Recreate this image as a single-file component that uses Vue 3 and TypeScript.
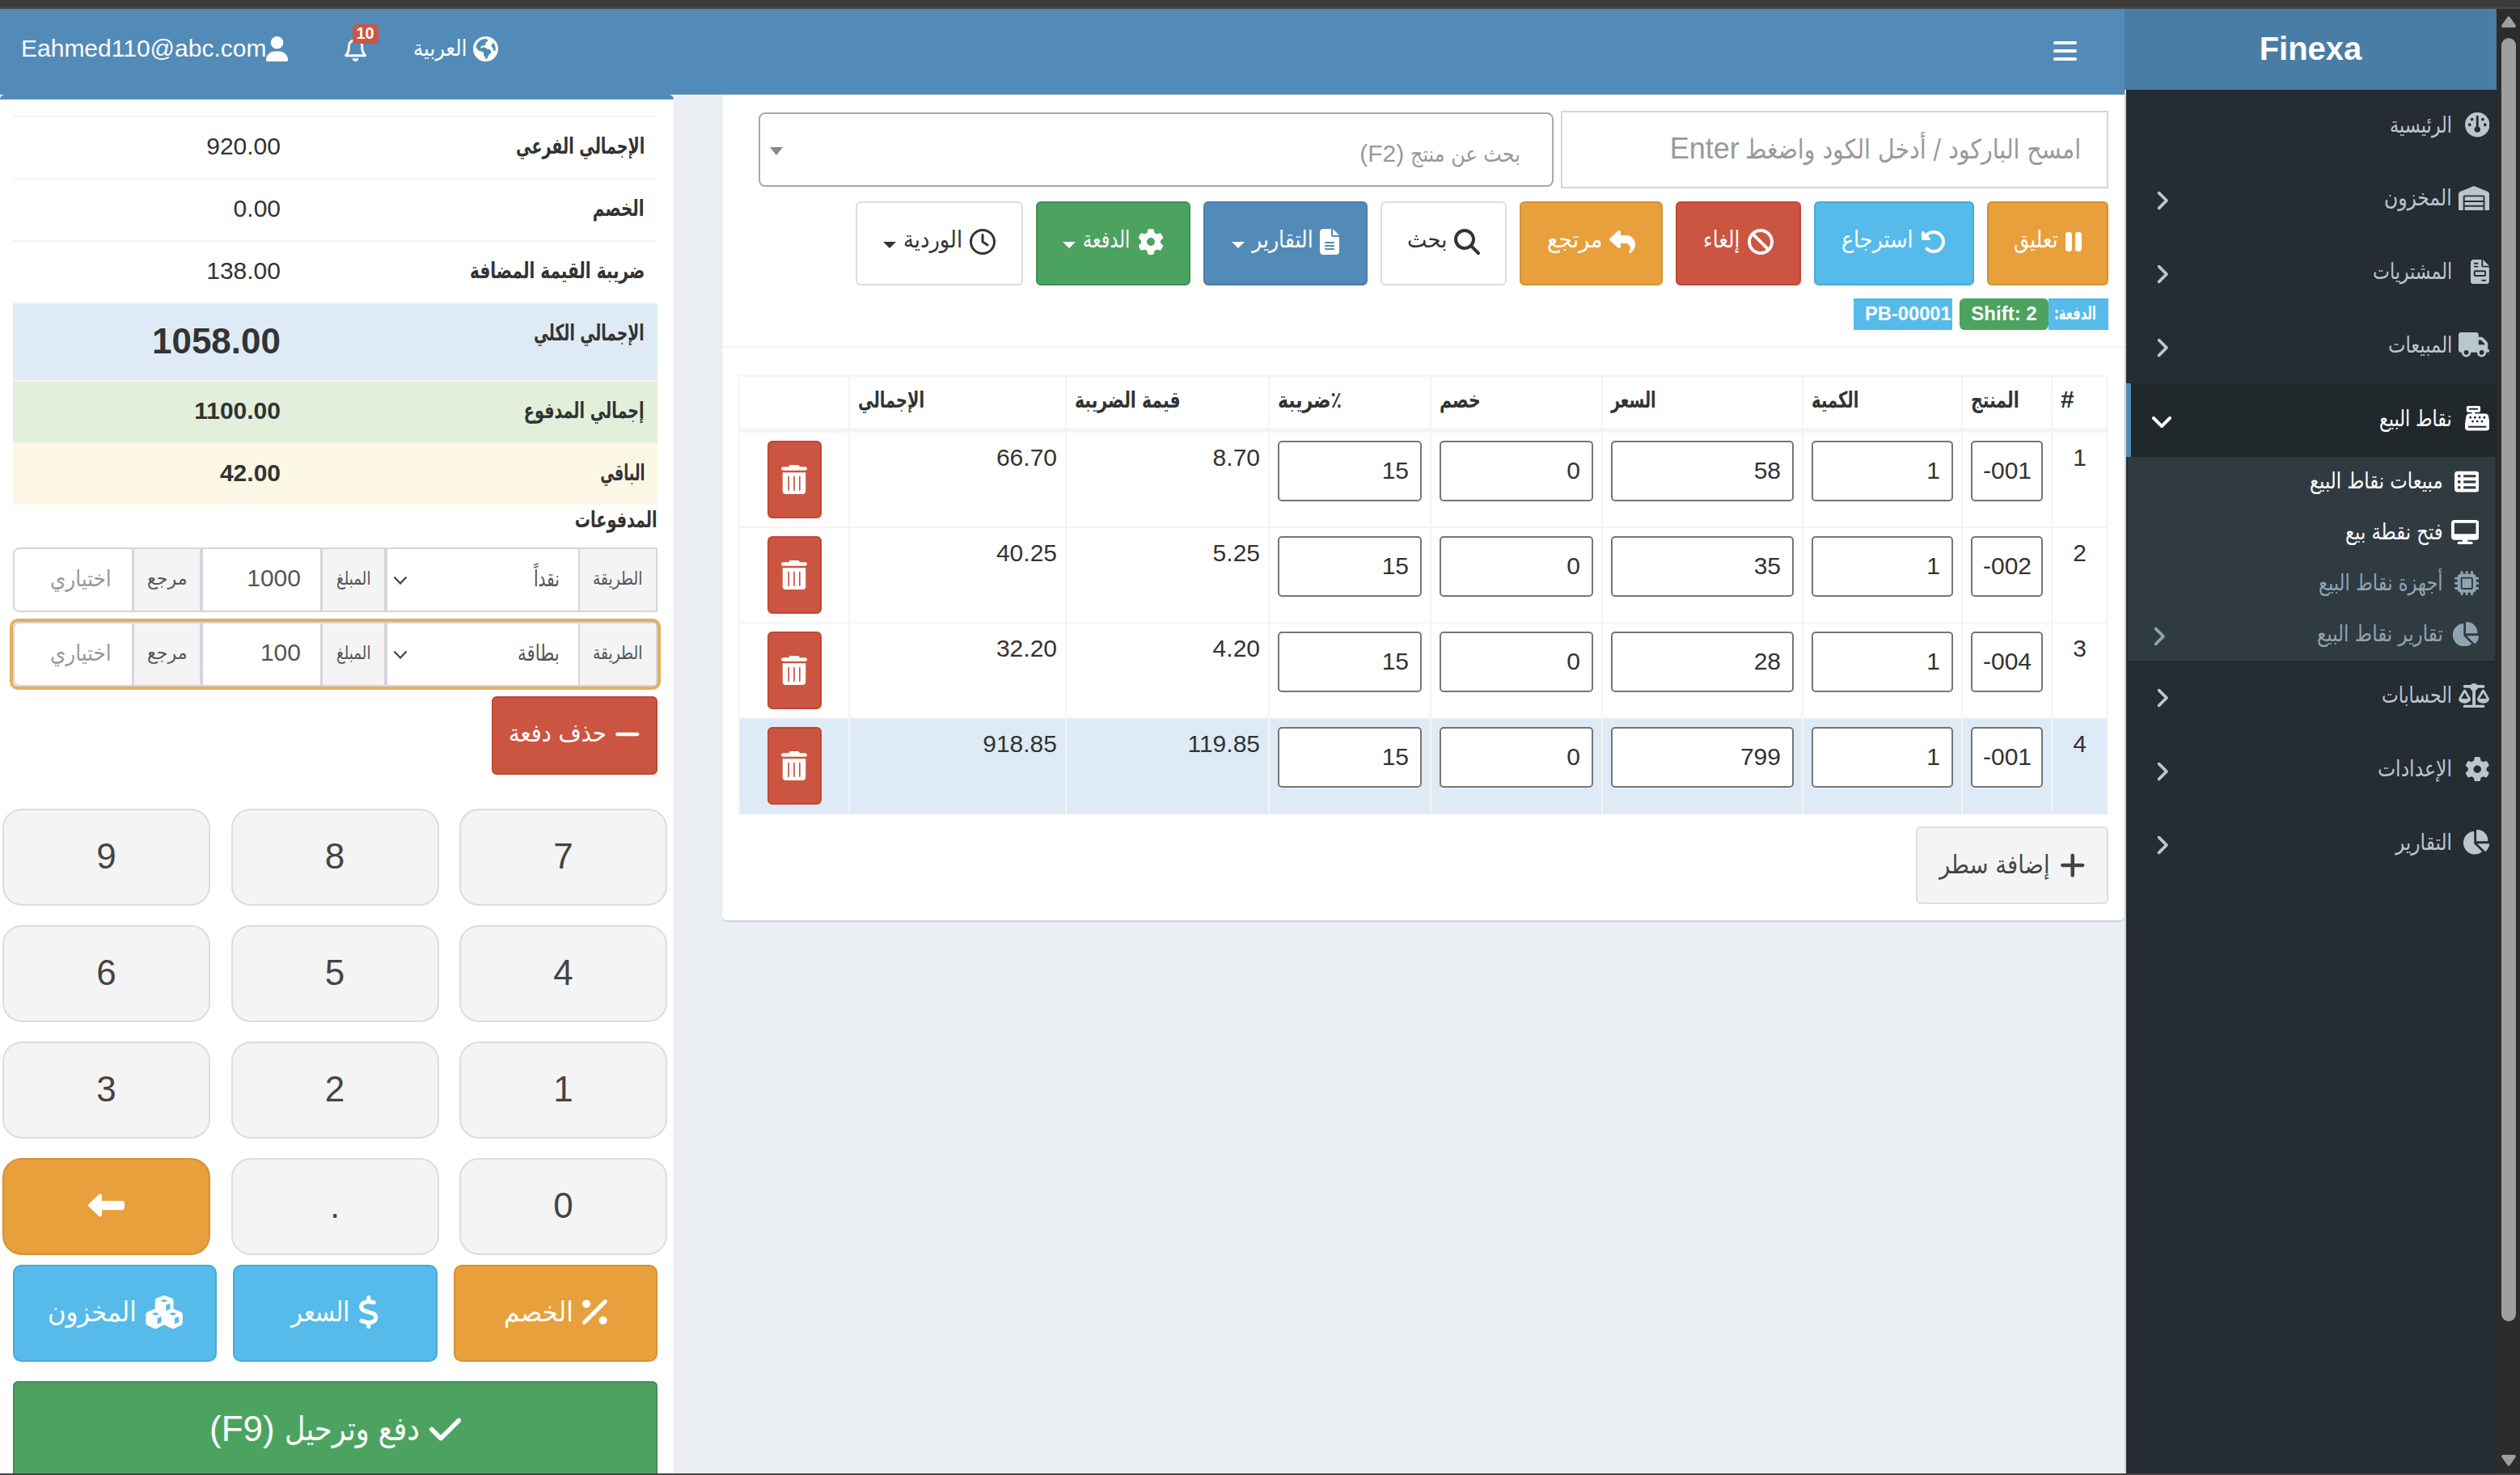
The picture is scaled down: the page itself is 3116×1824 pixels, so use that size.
<script setup lang="ts">
import { h } from 'vue'
import type { FunctionalComponent } from 'vue'

interface IconDef { w: number; d: string; eo?: boolean }

const icons: Record<string, IconDef> = {
  user: { w: 448, d: 'M224 256A128 128 0 1 0 224 0a128 128 0 1 0 0 256zm-45.7 48C79.8 304 0 383.8 0 482.3C0 498.7 13.3 512 29.7 512l388.6 0c16.4 0 29.7-13.3 29.7-29.7C448 383.8 368.2 304 269.7 304l-91.4 0z' },
  bell: { w: 448, d: 'M224 0c-17.7 0-32 14.3-32 32l0 19.2C119 66 64 130.6 64 208l0 25.4c0 45.4-15.5 89.5-43.8 124.9L5.3 377c-5.8 7.2-6.9 17.1-2.9 25.4S14.8 416 24 416l400 0c9.2 0 17.6-5.3 21.6-13.6s2.9-18.2-2.9-25.4l-14.9-18.6C399.5 322.9 384 278.8 384 233.4l0-25.4c0-77.4-55-142-128-156.8L256 32c0-17.7-14.3-32-32-32zm0 96c61.9 0 112 50.1 112 112l0 25.4c0 47.9 13.9 94.6 39.7 134.6L72.3 368C98.1 328 112 281.3 112 233.4l0-25.4c0-61.9 50.1-112 112-112zm64 352l-64 0-64 0c0 17 6.7 33.3 18.7 45.3s28.3 18.7 45.3 18.7s33.3-6.7 45.3-18.7s18.7-28.3 18.7-45.3z' },
  globe: { w: 512, eo: true, d: 'M256 0a256 256 0 1 0 0 512a256 256 0 1 0 0-512zM52 205l38 62c10 16 26 27 44 32l58 16c16 5 26 18 26 34v38c0 12 6 22 17 27s17 16 17 28v22c34-8 48-30 54-52c7-28 20-40 36-52c18-12 24-24 24-42v-8c0-20-14-38-33-43l-44-12c-14-4-22-16-36-22l-44-12c-10-3-20 2-26 10l-8 10c-10 10-24 2-20-12l10-22c6-12 18-18 30-18h28c22 0 36-16 34-36l-2-16c0-12 8-22 20-26l14-6c16-8 16-26 4-40l-22-16c-96-4-180 48-213 154zM388 156l-14 34c-6 14 0 30 14 34l20 6v38c0 14 12 26 26 24l24-4c8-52-6-108-40-150c-14-2-26 4-30 18z' },
  gauge: { w: 512, d: 'M0 256a256 256 0 1 1 512 0A256 256 0 1 1 0 256zm320 96c0-26.9-16.5-49.9-40-59.3L280 88c0-13.3-10.7-24-24-24s-24 10.7-24 24l0 204.7c-23.5 9.5-40 32.5-40 59.3c0 35.3 28.7 64 64 64s64-28.7 64-64zM144 176a32 32 0 1 0 0-64 32 32 0 1 0 0 64zm-16 80a32 32 0 1 0 -64 0 32 32 0 1 0 64 0zm288 32a32 32 0 1 0 0-64 32 32 0 1 0 0 64zM400 144a32 32 0 1 0 -64 0 32 32 0 1 0 64 0z' },
  warehouse: { w: 640, d: 'M0 488L0 171.3c0-26.2 15.9-49.7 40.2-59.4L308.1 4.8c7.6-3.1 16.1-3.1 23.8 0L599.8 111.9c24.3 9.7 40.2 33.3 40.2 59.4L640 488c0 13.3-10.7 24-24 24l-48 0c-13.3 0-24-10.7-24-24l0-264c0-17.7-14.3-32-32-32l-384 0c-17.7 0-32 14.3-32 32l0 264c0 13.3-10.7 24-24 24l-48 0c-13.3 0-24-10.7-24-24zm488 24l-336 0c-13.3 0-24-10.7-24-24l0-56 384 0 0 56c0 13.3-10.7 24-24 24zM128 400l0-64 384 0 0 64-384 0zm0-96l0-80 384 0 0 80-384 0z' },
  invoice: { w: 384, d: 'M64 0C28.7 0 0 28.7 0 64L0 448c0 35.3 28.7 64 64 64l256 0c35.3 0 64-28.7 64-64l0-288-128 0c-17.7 0-32-14.3-32-32L224 0 64 0zM256 0l0 128 128 0L256 0zM80 64l64 0c8.8 0 16 7.2 16 16s-7.2 16-16 16L80 96c-8.8 0-16-7.2-16-16s7.2-16 16-16zm0 64l64 0c8.8 0 16 7.2 16 16s-7.2 16-16 16l-64 0c-8.8 0-16-7.2-16-16s7.2-16 16-16zm16 96l192 0c17.7 0 32 14.3 32 32l0 64c0 17.7-14.3 32-32 32L96 352c-17.7 0-32-14.3-32-32l0-64c0-17.7 14.3-32 32-32zm0 32l0 64 192 0 0-64L96 256zM240 416l64 0c8.8 0 16 7.2 16 16s-7.2 16-16 16l-64 0c-8.8 0-16-7.2-16-16s7.2-16 16-16z' },
  truck: { w: 640, d: 'M48 0C21.5 0 0 21.5 0 48L0 368c0 26.5 21.5 48 48 48l16 0c0 53 43 96 96 96s96-43 96-96l128 0c0 53 43 96 96 96s96-43 96-96l32 0c17.7 0 32-14.3 32-32s-14.3-32-32-32l0-64 0-32 0-18.7c0-17-6.7-33.3-18.7-45.3L512 114.7c-12-12-28.3-18.7-45.3-18.7L416 96l0-48c0-26.5-21.5-48-48-48L48 0zM416 160l50.7 0L544 237.3l0 18.7-128 0 0-96zM112 416a48 48 0 1 1 96 0 48 48 0 1 1 -96 0zm368-48a48 48 0 1 1 0 96 48 48 0 1 1 0-96z' },
  register: { w: 512, eo: true, d: 'M64 0C46.3 0 32 14.3 32 32l0 64c0 17.7 14.3 32 32 32l80 0 0 32-57 0c-31.6 0-58.5 23.1-63.3 54.4L1.1 364.1C.4 368.8 0 373.6 0 378.4L0 448c0 35.3 28.7 64 64 64l384 0c35.3 0 64-28.7 64-64l0-69.6c0-4.8-.4-9.6-1.1-14.4L488.2 214.4C483.5 183.1 456.6 160 425 160l-217 0 0-32 80 0c17.7 0 32-14.3 32-32l0-64c0-17.7-14.3-32-32-32L64 0zM96 48l160 0c8.8 0 16 7.2 16 16s-7.2 16-16 16L96 80c-8.8 0-16-7.2-16-16s7.2-16 16-16zM64 432c0-8.8 7.2-16 16-16l352 0c8.8 0 16 7.2 16 16s-7.2 16-16 16L80 448c-8.8 0-16-7.2-16-16zM88 240a24 24 0 1 0 48 0a24 24 0 1 0-48 0zM184 240a24 24 0 1 0 48 0a24 24 0 1 0-48 0zM280 240a24 24 0 1 0 48 0a24 24 0 1 0-48 0zM376 240a24 24 0 1 0 48 0a24 24 0 1 0-48 0zM136 320a24 24 0 1 0 48 0a24 24 0 1 0-48 0zM232 320a24 24 0 1 0 48 0a24 24 0 1 0-48 0zM328 320a24 24 0 1 0 48 0a24 24 0 1 0-48 0z' },
  list: { w: 512, eo: true, d: 'M64 48h384a64 64 0 0 1 64 64v304a64 64 0 0 1-64 64H64a64 64 0 0 1-64-64V112a64 64 0 0 1 64-64zM68 122h56v52H68zM188 122h254v52H188zM68 240h56v52H68zM188 240h254v52H188zM68 358h56v52H68zM188 358h254v52H188z' },
  desktop: { w: 576, d: 'M64 0C28.7 0 0 28.7 0 64L0 352c0 35.3 28.7 64 64 64l176 0-10.7 32L160 448c-17.7 0-32 14.3-32 32s14.3 32 32 32l256 0c17.7 0 32-14.3 32-32s-14.3-32-32-32l-69.3 0L336 416l176 0c35.3 0 64-28.7 64-64l0-288c0-35.3-28.7-64-64-64L64 0zM512 64l0 224L64 288 64 64l448 0z' },
  chip: { w: 512, d: 'M176 24c0-13.3-10.7-24-24-24s-24 10.7-24 24l0 40c-35.3 0-64 28.7-64 64l-40 0c-13.3 0-24 10.7-24 24s10.7 24 24 24l40 0 0 56-40 0c-13.3 0-24 10.7-24 24s10.7 24 24 24l40 0 0 56-40 0c-13.3 0-24 10.7-24 24s10.7 24 24 24l40 0c0 35.3 28.7 64 64 64l0 40c0 13.3 10.7 24 24 24s24-10.7 24-24l0-40 56 0 0 40c0 13.3 10.7 24 24 24s24-10.7 24-24l0-40 56 0 0 40c0 13.3 10.7 24 24 24s24-10.7 24-24l0-40c35.3 0 64-28.7 64-64l40 0c13.3 0 24-10.7 24-24s-10.7-24-24-24l-40 0 0-56 40 0c13.3 0 24-10.7 24-24s-10.7-24-24-24l-40 0 0-56 40 0c13.3 0 24-10.7 24-24s-10.7-24-24-24l-40 0c0-35.3-28.7-64-64-64l0-40c0-13.3-10.7-24-24-24s-24 10.7-24 24l0 40-56 0 0-40c0-13.3-10.7-24-24-24s-24 10.7-24 24l0 40-56 0 0-40zM160 128l192 0c17.7 0 32 14.3 32 32l0 192c0 17.7-14.3 32-32 32l-192 0c-17.7 0-32-14.3-32-32l0-192c0-17.7 14.3-32 32-32zm192 32l-192 0 0 192 192 0 0-192z' },
  pie: { w: 576, d: 'M304 240l0-223.4c0-9 7-16.6 16-16.6C443.7 0 544 100.3 544 224c0 9-7.6 16-16.6 16L304 240zM32 272C32 150.7 122.1 50.3 239 34.3c9.2-1.3 17 6.1 17 15.4L256 288 412.5 444.5c6.7 6.7 6.2 17.7-1.5 23.1C371.8 495.6 323.8 512 272 512C139.5 512 32 404.6 32 272zm526.4 16c9.3 0 16.6 7.8 15.4 17c-7.7 55.9-34.6 105.6-73.9 142.3c-6 5.6-15.4 5.2-21.2-.7L320 288l238.4 0z' },
  scale: { w: 640, d: 'M384 32l128 0c17.7 0 32 14.3 32 32s-14.3 32-32 32L398.4 96c-5.2 25.8-22.9 47.1-46.4 57.3L352 448l160 0c17.7 0 32 14.3 32 32s-14.3 32-32 32l-192 0-192 0c-17.7 0-32-14.3-32-32s14.3-32 32-32l160 0 0-294.7c-23.5-10.3-41.2-31.6-46.4-57.3L128 96c-17.7 0-32-14.3-32-32s14.3-32 32-32l128 0c14.6-19.4 37.8-32 64-32s49.4 12.6 64 32zm55.6 288l144.9 0L512 195.8 439.6 320zM512 416c-62.9 0-115.2-34-126-78.9c-2.6-11 1-22.3 6.7-32.1l95.2-163.2c5-8.6 14.2-13.8 24.1-13.8s19.1 5.3 24.1 13.8l95.2 163.2c5.7 9.8 9.3 21.1 6.7 32.1C627.2 382 574.9 416 512 416zM126.8 195.8L54.4 320l144.9 0L126.8 195.8zM.9 337.1c-2.6-11 1-22.3 6.7-32.1l95.2-163.2c5-8.6 14.2-13.8 24.1-13.8s19.1 5.3 24.1 13.8l95.2 163.2c5.7 9.8 9.3 21.1 6.7 32.1C242 382 189.7 416 126.8 416S11.7 382 .9 337.1z' },
  gear: { w: 512, d: 'M495.9 166.6c3.2 8.7 .5 18.4-6.4 24.6l-43.3 39.4c1.1 8.3 1.7 16.8 1.7 25.4s-.6 17.1-1.7 25.4l43.3 39.4c6.9 6.2 9.6 15.9 6.4 24.6c-4.4 11.9-9.7 23.3-15.8 34.3l-4.7 8.1c-6.6 11-14 21.4-22.1 31.2c-5.9 7.2-15.7 9.6-24.5 6.8l-55.7-17.7c-13.4 10.3-28.2 18.9-44 25.4l-12.5 57.1c-2 9.1-9 16.3-18.2 17.8c-13.8 2.3-28 3.5-42.5 3.5s-28.7-1.2-42.5-3.5c-9.2-1.5-16.2-8.7-18.2-17.8l-12.5-57.1c-15.8-6.5-30.6-15.1-44-25.4L83.1 425.9c-8.8 2.8-18.6 .3-24.5-6.8c-8.1-9.8-15.5-20.2-22.1-31.2l-4.7-8.1c-6.1-11-11.4-22.4-15.8-34.3c-3.2-8.7-.5-18.4 6.4-24.6l43.3-39.4C64.6 273.1 64 264.6 64 256s.6-17.1 1.7-25.4L22.4 191.2c-6.9-6.2-9.6-15.9-6.4-24.6c4.4-11.9 9.7-23.3 15.8-34.3l4.7-8.1c6.6-11 14-21.4 22.1-31.2c5.9-7.2 15.7-9.6 24.5-6.8l55.7 17.7c13.4-10.3 28.2-18.9 44-25.4l12.5-57.1c2-9.1 9-16.3 18.2-17.8C227.3 1.2 241.5 0 256 0s28.7 1.2 42.5 3.5c9.2 1.5 16.2 8.7 18.2 17.8l12.5 57.1c15.8 6.5 30.6 15.1 44 25.4l55.7-17.7c8.8-2.8 18.6-.3 24.5 6.8c8.1 9.8 15.5 20.2 22.1 31.2l4.7 8.1c6.1 11 11.4 22.4 15.8 34.3zM256 336a80 80 0 1 0 0-160 80 80 0 1 0 0 160z' },
  undo: { w: 512, d: 'M48.5 224L40 224c-13.3 0-24-10.7-24-24L16 72c0-9.7 5.8-18.5 14.8-22.2s19.3-1.7 26.2 5.2L98.6 96.6c87.6-86.5 228.7-86.2 315.8 1c87.5 87.5 87.5 229.3 0 316.8s-229.3 87.5-316.8 0c-12.5-12.5-12.5-32.8 0-45.3s32.8-12.5 45.3 0c62.5 62.5 163.8 62.5 226.3 0s62.5-163.8 0-226.3c-62.2-62.2-162.7-62.5-225.3-1L185 183c6.9 6.9 8.9 17.2 5.2 26.2s-12.5 14.8-22.2 14.8L48.5 224z' },
  ban: { w: 512, d: 'M367.2 412.5L99.5 144.8C77.1 176.1 64 214.5 64 256c0 106 86 192 192 192c41.5 0 79.9-13.1 111.2-35.5zm45.3-45.3C434.9 335.9 448 297.5 448 256c0-106-86-192-192-192c-41.5 0-79.9 13.1-111.2 35.5L412.5 367.2zM0 256a256 256 0 1 1 512 0A256 256 0 1 1 0 256z' },
  reply: { w: 512, d: 'M205 34.8c11.5 5.1 19 16.6 19 29.2l0 64 112 0c97.2 0 176 78.8 176 176c0 113.3-81.5 163.9-100.2 174.1c-2.5 1.4-5.3 1.9-8.1 1.9c-10.9 0-19.7-8.9-19.7-19.7c0-7.5 4.3-14.4 9.8-19.5c9.4-8.8 22.2-26.4 22.2-56.7c0-53-43-96-96-96l-96 0 0 64c0 12.6-7.4 24.1-19 29.2s-25 3-34.4-5.4l-160-144C3.9 225.7 0 217.1 0 208s3.9-17.7 10.6-23.8l160-144c9.4-8.5 22.9-10.6 34.4-5.4z' },
  search: { w: 512, d: 'M416 208c0 45.9-14.9 88.3-40 122.7L502.6 457.4c12.5 12.5 12.5 32.8 0 45.3s-32.8 12.5-45.3 0L330.7 376c-34.4 25.2-76.8 40-122.7 40C93.1 416 0 322.9 0 208S93.1 0 208 0S416 93.1 416 208zM208 352a144 144 0 1 0 0-288 144 144 0 1 0 0 288z' },
  file: { w: 384, d: 'M64 0C28.7 0 0 28.7 0 64L0 448c0 35.3 28.7 64 64 64l256 0c35.3 0 64-28.7 64-64l0-288-128 0c-17.7 0-32-14.3-32-32L224 0 64 0zM256 0l0 128 128 0L256 0zM112 256l160 0c8.8 0 16 7.2 16 16s-7.2 16-16 16l-160 0c-8.8 0-16-7.2-16-16s7.2-16 16-16zm0 64l160 0c8.8 0 16 7.2 16 16s-7.2 16-16 16l-160 0c-8.8 0-16-7.2-16-16s7.2-16 16-16zm0 64l160 0c8.8 0 16 7.2 16 16s-7.2 16-16 16l-160 0c-8.8 0-16-7.2-16-16s7.2-16 16-16z' },
  clock: { w: 512, d: 'M464 256A208 208 0 1 1 48 256a208 208 0 1 1 416 0zM0 256a256 256 0 1 0 512 0A256 256 0 1 0 0 256zM232 120l0 136c0 8 4 15.5 10.7 20l96 64c11 7.4 25.9 4.4 33.3-6.7s4.4-25.9-6.7-33.3L280 243.2 280 120c0-13.3-10.7-24-24-24s-24 10.7-24 24z' },
  pause: { w: 320, d: 'M48 64C21.5 64 0 85.5 0 112L0 400c0 26.5 21.5 48 48 48l32 0c26.5 0 48-21.5 48-48l0-288c0-26.5-21.5-48-48-48L48 64zm192 0c-26.5 0-48 21.5-48 48l0 288c0 26.5 21.5 48 48 48l32 0c26.5 0 48-21.5 48-48l0-288c0-26.5-21.5-48-48-48l-32 0z' },
  trash: { w: 448, eo: true, d: 'M135.2 17.7C140.6 6.8 151.7 0 163.8 0L284.2 0c12.1 0 23.2 6.8 28.6 17.7L320 32l96 0c17.7 0 32 14.3 32 32s-14.3 32-32 32L32 96C14.3 96 0 81.7 0 64S14.3 32 32 32l96 0 7.2-14.3zM24 128l400 0 0 320c0 35.3-28.7 64-64 64L88 512c-35.3 0-64-28.7-64-64l0-320zm104 64c-8.800 0-12 7.200-12 16l0 224c0 8.800 3.200 16 12 16s12-7.200 12-16l0-224c0-8.800-3.200-16-12-16zm96 0c-8.800 0-12 7.200-12 16l0 224c0 8.800 3.200 16 12 16s12-7.200 12-16l0-224c0-8.800-3.200-16-12-16zm96 0c-8.800 0-12 7.200-12 16l0 224c0 8.800 3.200 16 12 16s12-7.200 12-16l0-224c0-8.800-3.200-16-12-16z' },
  plus: { w: 448, d: 'M256 80c0-17.7-14.3-32-32-32s-32 14.3-32 32l0 144L48 224c-17.7 0-32 14.3-32 32s14.3 32 32 32l144 0 0 144c0 17.7 14.3 32 32 32s32-14.3 32-32l0-144 144 0c17.7 0 32-14.3 32-32s-14.3-32-32-32l-144 0 0-144z' },
  minus: { w: 448, d: 'M432 256c0 17.7-14.3 32-32 32L48 288c-17.7 0-32-14.3-32-32s14.3-32 32-32l352 0c17.7 0 32 14.3 32 32z' },
  check: { w: 448, d: 'M438.6 105.4c12.5 12.5 12.5 32.8 0 45.3l-256 256c-12.5 12.5-32.8 12.5-45.3 0l-128-128c-12.5-12.5-12.5-32.8 0-45.3s32.8-12.5 45.3 0L160 338.7 393.4 105.4c12.5-12.5 32.8-12.5 45.3 0z' },
  left: { w: 512, d: 'M177.5 98c8.8 3.8 14.5 12.4 14.5 22l0 72 288 0c17.7 0 32 14.3 32 32l0 64c0 17.7-14.3 32-32 32l-288 0 0 72c0 9.6-5.7 18.2-14.5 22s-19 2-26-4.6l-144-136C2.7 268.9 0 262.6 0 256s2.7-12.9 7.5-17.4l144-136c7-6.6 17.2-8.4 26-4.6z' },
  percent: { w: 384, d: 'M374.6 118.6c12.5-12.5 12.5-32.8 0-45.3s-32.8-12.5-45.3 0l-320 320c-12.5 12.5-12.5 32.8 0 45.3s32.8 12.5 45.3 0l320-320zM128 128A64 64 0 1 0 0 128a64 64 0 1 0 128 0zM384 384a64 64 0 1 0 -128 0 64 64 0 1 0 128 0z' },
  dollar: { w: 320, d: 'M160 0c17.7 0 32 14.3 32 32l0 35.7c1.6 .2 3.1 .4 4.7 .7c.4 .1 .7 .1 1.1 .2l48 8.8c17.4 3.2 28.9 19.9 25.7 37.2s-19.9 28.9-37.2 25.7l-47.5-8.7c-31.3-4.6-58.9-1.5-78.3 6.2s-27.2 18.3-29 28.1c-2 10.7-.5 16.7 1.2 20.4c1.8 3.9 5.5 8.3 12.8 13.2c16.3 10.7 41.3 17.7 73.7 26.3l2.9 .8c28.6 7.6 63.6 16.8 89.6 33.8c14.2 9.3 27.6 21.9 35.9 39.5c8.5 17.9 10.3 37.9 6.4 59.2c-6.9 38-33.1 63.4-65.6 76.7c-13.7 5.6-28.6 9.2-44.4 11l0 33.4c0 17.7-14.3 32-32 32s-32-14.3-32-32l0-34.9c-.4-.1-.9-.1-1.3-.2l-.2 0c-24.4-3.8-64.5-14.3-91.5-26.3c-16.1-7.2-23.4-26.1-16.2-42.2s26.1-23.4 42.2-16.2c20.9 9.3 55.3 18.5 75.2 21.6c31.9 4.7 58.2 2 76-5.3c16.9-6.9 24.6-16.9 26.8-28.9c1.9-10.6 .4-16.7-1.3-20.4c-1.9-4-5.6-8.4-13-13.3c-16.4-10.7-41.5-17.7-74-26.3l-2.8-.7C119.4 279.3 84.4 270 58.4 253c-14.2-9.3-27.5-22-35.8-39.6c-8.4-17.9-10.1-37.9-6.1-59.2C23.7 116 52.3 91.2 84.8 78.3c13.3-5.3 27.9-8.9 43.2-11L128 32c0-17.7 14.3-32 32-32z' },
  cubes: { w: 576, eo: true, d: 'M272 4q16-6 32 0l92 34q34 12 34 44v126l106 38q34 14 36 48v124q-2 30-30 44l-94 46q-24 12-48 0L288 452l-112 56q-24 12-48 0l-94-46Q6 448 4 418V294q2-34 36-48l106-38V82q0-32 34-44zM288 58l-58 22 58 24 58-24zM316 148v92l64-32v-86zM154 262l-58 22 58 24 58-24zM182 352v92l64-32v-86zM422 262l-58 22 58 24 58-24zM450 352v92l64-32v-86z' },
  chevron: { w: 320, d: 'M278.6 233.4c12.5 12.5 12.5 32.8 0 45.3l-160 160c-12.5 12.5-32.8 12.5-45.3 0s-12.5-32.8 0-45.3L210.7 256 73.4 118.6c-12.5-12.5-12.5-32.8 0-45.3s32.8-12.5 45.3 0l160 160z' },
}

const Ic: FunctionalComponent<{ n: string; s: number }> = (p) => {
  const i = icons[p.n]
  return h('svg', { viewBox: `0 0 ${i.w} 512`, width: (p.s * i.w) / 512, height: p.s, style: 'flex:none;display:block' }, [
    h('path', { d: i.d, fill: 'currentColor', 'fill-rule': i.eo ? 'evenodd' : 'nonzero' }),
  ])
}
Ic.props = ['n', 's']

/* Sets an Arabic run to the width its label is designed for. */
const vFit = {
  mounted(el: HTMLElement, b: { value: number }) {
    const nat = el.offsetWidth
    if (!nat) return
    el.style.transform = `scaleX(${b.value / nat})`
    el.style.marginLeft = `${b.value - nat}px`
  },
}

const menuTop = [
  { n: 'gauge', t: 'الرئيسية', w: 77, more: false },
  { n: 'warehouse', t: 'المخزون', w: 84, more: true },
  { n: 'invoice', t: 'المشتريات', w: 98, more: true },
  { n: 'truck', t: 'المبيعات', w: 79, more: true },
]
const menuSub = [
  { n: 'list', t: 'مبيعات نقاط البيع', w: 165, on: true, more: false },
  { n: 'desktop', t: 'فتح نقطة بيع', w: 121, on: true, more: false },
  { n: 'chip', t: 'أجهزة نقاط البيع', w: 154, on: false, more: false },
  { n: 'pie', t: 'تقارير نقاط البيع', w: 156, on: false, more: true },
]
const menuEnd = [
  { n: 'scale', t: 'الحسابات', w: 87 },
  { n: 'gear', t: 'الإعدادات', w: 92 },
  { n: 'pie', t: 'التقارير', w: 70 },
]
const tools = [
  { n: 'pause', t: 'تعليق', w: 55, bw: 150, c: 'warning', caret: false },
  { n: 'undo', t: 'استرجاع', w: 89, bw: 198, c: 'info', caret: false },
  { n: 'ban', t: 'إلغاء', w: 45, bw: 155, c: 'danger', caret: false },
  { n: 'reply', t: 'مرتجع', w: 69, bw: 177, c: 'warning', caret: false },
  { n: 'search', t: 'بحث', w: 49, bw: 156, c: 'plain', caret: false },
  { n: 'file', t: 'التقارير', w: 76, bw: 203, c: 'primary', caret: true },
  { n: 'gear', t: 'الدفعة', w: 58, bw: 191, c: 'success', caret: true },
  { n: 'clock', t: 'الوردية', w: 73, bw: 207, c: 'plain', caret: true },
]
const heads = [
  { t: 'المنتج', w: 60 }, { t: 'الكمية', w: 58 }, { t: 'السعر', w: 56 }, { t: 'خصم', w: 51 },
  { t: '٪ضريبة', w: 79 }, { t: 'قيمة الضريبة', w: 131 }, { t: 'الإجمالي', w: 82 },
]
const lines = [
  { id: 1, sku: '-001', qty: 1, price: 58, disc: 0, tax: 15, tv: '8.70', tot: '66.70' },
  { id: 2, sku: '-002', qty: 1, price: 35, disc: 0, tax: 15, tv: '5.25', tot: '40.25' },
  { id: 3, sku: '-004', qty: 1, price: 28, disc: 0, tax: 15, tv: '4.20', tot: '32.20' },
  { id: 4, sku: '-001', qty: 1, price: 799, disc: 0, tax: 15, tv: '119.85', tot: '918.85' },
]
const totals = [
  { t: 'الإجمالي الفرعي', w: 159, v: '920.00', c: '' },
  { t: 'الخصم', w: 64, v: '0.00', c: '' },
  { t: 'ضريبة القيمة المضافة', w: 216, v: '138.00', c: '' },
  { t: 'الإجمالي الكلي', w: 137, v: '1058.00', c: 'grand' },
  { t: 'إجمالي المدفوع', w: 149, v: '1100.00', c: 'paid' },
  { t: 'الباقي', w: 55, v: '42.00', c: 'rest' },
]
const payments = [
  { t: 'نقداً', w: 32, v: '1000', on: false },
  { t: 'بطاقة', w: 52, v: '100', on: true },
]
const keys = ['7', '8', '9', '4', '5', '6', '1', '2', '3', '0', '.', 'back']
</script>

<template>
  <div class="page">
    <div class="strip"></div>
    <div class="body">
      <div class="scroll">
        <svg width="18" height="14" viewBox="0 0 18 14"><path d="M7.500 1Q9-.5 10.500 1L17.500 11Q18.500 14 16 14H2Q-.5 14 .5 11z" fill="#9f9f9f" /></svg>
        <div class="thumb"></div>
        <svg class="down" width="18" height="14" viewBox="0 0 18 14"><path d="M7.500 13Q9 14.500 10.500 13L17.500 3Q18.500 0 16 0H2Q-.5 0 .5 3z" fill="#9f9f9f" /></svg>
      </div>

      <aside class="side">
        <div class="logo">Finexa</div>
        <nav class="menu">
          <div v-for="m in menuTop" :key="m.t" class="item">
            <span class="mi"><Ic :n="m.n" :s="30.5" /></span>
            <span class="ar" v-fit="m.w">{{ m.t }}</span>
            <span v-if="m.more" class="chev"><Ic n="chevron" :s="30" /></span>
          </div>
          <div class="item active">
            <span class="mi"><Ic n="register" :s="30.5" /></span>
            <span class="ar" v-fit="90">نقاط البيع</span>
            <span class="chev open"><Ic n="chevron" :s="32" /></span>
          </div>
          <div class="sub">
            <div v-for="m in menuSub" :key="m.t" class="subitem" :class="{ on: m.on }">
              <span class="mi"><Ic :n="m.n" :s="30.5" /></span>
              <span class="ar" v-fit="m.w">{{ m.t }}</span>
              <span v-if="m.more" class="chev"><Ic n="chevron" :s="30" /></span>
            </div>
          </div>
          <div v-for="m in menuEnd" :key="m.t" class="item">
            <span class="mi"><Ic :n="m.n" :s="30.5" /></span>
            <span class="ar" v-fit="m.w">{{ m.t }}</span>
            <span class="chev"><Ic n="chevron" :s="30" /></span>
          </div>
        </nav>
      </aside>

      <div class="content">
        <header class="top">
          <div class="burger"><i></i><i></i><i></i></div>
          <div class="tools">
            <span class="lang"><Ic n="globe" :s="31" /><span class="ar" v-fit="66">العربية</span></span>
            <span class="bell"><Ic n="bell" :s="31" /><b>10</b></span>
            <span class="acct"><Ic n="user" :s="31" /><span dir="ltr">Eahmed110@abc.com</span></span>
          </div>
        </header>

        <div class="cols">
          <main class="card">
            <div class="find">
              <div class="barcode">
                <span class="ar" v-fit="415">امسح الباركود / أدخل الكود واضغط</span>
                <span dir="ltr">Enter</span>
              </div>
              <div class="select">
                <span class="ph"><span class="ar" v-fit="136">بحث عن منتج</span><bdi dir="ltr">(F2)</bdi></span>
                <i class="tri"></i>
              </div>
            </div>
            <div class="bar">
              <button v-for="b in tools" :key="b.t" :class="['btn', b.c]" :style="{ width: b.bw + 'px' }">
                <Ic :n="b.n" :s="32" /><span class="ar" v-fit="b.w">{{ b.t }}</span><i v-if="b.caret" class="caret"></i>
              </button>
            </div>
            <div class="badges">
              <span class="bd first"><span class="ar" v-fit="52">الدفعة:</span></span>
              <span class="bd shift" dir="ltr">Shift: 2</span>
              <span class="bd pb" dir="ltr">PB-00001</span>
            </div>

            <div class="grid">
              <div class="tr th">
                <div class="c hash">#</div>
                <div v-for="x in heads" :key="x.t" class="c"><span class="ar" v-fit="x.w">{{ x.t }}</span></div>
                <div class="c"></div>
              </div>
              <div v-for="l in lines" :key="l.id" class="tr" :class="{ sel: l.id === 4 }">
                <div class="c mid">{{ l.id }}</div>
                <div class="c"><div class="inp sku" dir="ltr">{{ l.sku }}</div></div>
                <div class="c"><div class="inp">{{ l.qty }}</div></div>
                <div class="c"><div class="inp">{{ l.price }}</div></div>
                <div class="c"><div class="inp">{{ l.disc }}</div></div>
                <div class="c"><div class="inp">{{ l.tax }}</div></div>
                <div class="c">{{ l.tv }}</div>
                <div class="c">{{ l.tot }}</div>
                <div class="c del"><button class="btn danger rm"><Ic n="trash" :s="36.5" /></button></div>
              </div>
            </div>
            <button class="btn grey add"><Ic n="plus" :s="36" /><span class="ar" v-fit="137">إضافة سطر</span></button>
          </main>

          <section class="panel">
            <div v-for="r in totals" :key="r.t" class="row" :class="r.c">
              <div class="lab"><span class="ar" v-fit="r.w">{{ r.t }}</span></div>
              <div class="val">{{ r.v }}</div>
            </div>
            <div class="ptitle"><span class="ar" v-fit="102">المدفوعات</span></div>
            <div v-for="p in payments" :key="p.t" class="pay" :class="{ on: p.on }">
              <div class="ad a1"><span class="ar" v-fit="61">الطريقة</span></div>
              <div class="fld s1">
                <span class="ar" v-fit="p.w">{{ p.t }}</span>
                <svg width="18" height="11" viewBox="0 0 18 11"><path d="M1.500 1.500L9 9.500L16.500 1.500" fill="none" stroke="#444" stroke-width="2.200" /></svg>
              </div>
              <div class="ad a2"><span class="ar" v-fit="43">المبلغ</span></div>
              <div class="fld s2">{{ p.v }}</div>
              <div class="ad a3"><span class="ar" v-fit="49">مرجع</span></div>
              <div class="fld s3"><span class="ar" v-fit="76">اختياري</span></div>
            </div>
            <button class="btn danger rmpay"><Ic n="minus" :s="36" /><span class="ar" v-fit="121">حذف دفعة</span></button>
            <div class="pad">
              <button v-for="k in keys" :key="k" class="key" :class="{ back: k === 'back' }">
                <Ic v-if="k === 'back'" n="left" :s="45" /><template v-else>{{ k }}</template>
              </button>
            </div>
            <div class="acts">
              <button class="btn warning"><Ic n="percent" :s="41" /><span class="ar" v-fit="86">الخصم</span></button>
              <button class="btn info"><Ic n="dollar" :s="41" /><span class="ar" v-fit="72">السعر</span></button>
              <button class="btn info"><Ic n="cubes" :s="41" /><span class="ar" v-fit="110">المخزون</span></button>
            </div>
            <button class="btn success post"><Ic n="check" :s="45" /><span class="ar" v-fit="167">دفع وترحيل</span><bdi dir="ltr">(F9)</bdi></button>
          </section>
        </div>
      </div>
    </div>
    <div class="foot"></div>
  </div>
</template>

<style>
body { margin: 0; background: #ecf0f5; }
</style>

<style scoped>
* { box-sizing: border-box; }
.page { width: 3116px; height: 1824px; overflow: hidden; display: flex; flex-direction: column; direction: rtl; font: 30px/1.42857 "Liberation Sans", Arial, sans-serif; color: #333; background: #ecf0f5; }
.strip { height: 11px; flex: none; background: #3b3b3b; border-bottom: 2px solid #484848; }
.foot { height: 2px; flex: none; background: #474444; }
.body { flex: 1; min-height: 0; display: flex; }
.ar { display: inline-block; flex: none; white-space: nowrap; font-family: "DejaVu Sans", sans-serif; font-size: .92em; line-height: 1; transform-origin: 100% 50%; }
button { font: inherit; margin: 0; padding: 0; cursor: pointer; }

.scroll { width: 29px; flex: none; background: #2c2c2c; display: flex; flex-direction: column; align-items: center; padding: 9px 0; }
.scroll svg { display: block; flex: none; }
.thumb { width: 18px; height: 1587px; margin-top: 13px; border-radius: 9px; background: #9f9f9f; }
.down { margin-top: auto; }

.side { width: 460px; flex: none; display: flex; flex-direction: column; }
.logo { height: 100px; flex: none; background: #4a7da6; color: #fff; font-weight: 700; font-size: 40px; line-height: 98px; text-align: center; }
.menu { flex: 1; background: #252c33; border-left: 2px solid #d2d6de; color: #b9c6ce; }
.item { height: 90.75px; display: flex; align-items: center; padding-right: 9px; padding-left: 38px; padding-bottom: 4px; }
.mi { width: 46px; flex: none; display: flex; }
.active { background: #21282c; color: #fff; border-left: 6px solid #528bb8; padding-left: 32px; }
.chev { margin-right: auto; padding-top: 6px; }
.chev.open { transform: rotate(90deg); padding: 0; margin-left: -4px; margin-top: 7px; }
.item .chev:not(.open) { margin-left: -3px; }
.sub { margin: 0 2px; background: #303a41; color: #8fa4b1; height: 252px; }
.subitem { height: 63px; display: flex; align-items: center; padding-right: 20px; padding-left: 29px; padding-bottom: 3px; }
.subitem .mi { width: 44px; }
.subitem.on { color: #fff; }

.content { flex: 1; min-width: 0; display: flex; flex-direction: column; }
.top { height: 106px; flex: none; background: #538bb8; color: #fff; display: flex; justify-content: space-between; align-items: center; padding: 0 59px 8px 26px; }
.burger { width: 29px; display: flex; flex-direction: column; gap: 6px; padding-top: 6px; }
.burger i { height: 4px; border-radius: 2px; background: #fff; }
.tools { display: flex; align-items: center; }
.lang { display: flex; align-items: center; gap: 8px; }
.bell { position: relative; margin: 0 58px 0 69px; }
.bell b { position: absolute; left: 10px; top: -15px; width: 32px; height: 24px; border-radius: 5px; background: #cb5643; font-size: 20px; line-height: 23px; text-align: center; }
.acct { display: flex; align-items: center; }

.cols { flex: 1; min-height: 0; display: flex; justify-content: space-between; align-items: flex-start; }
.card { width: 1734px; height: 1021px; background: #fff; border-radius: 6px; box-shadow: 0 2px 2px rgba(0, 0, 0, .12); display: flex; flex-direction: column; align-items: flex-start; padding-top: 20px; }
.find { display: flex; align-items: center; gap: 9px; padding-right: 20px; }
.barcode { width: 677px; height: 96px; border: 2px solid #d2d6de; padding-right: 32px; font-size: 36px; line-height: 90px; color: #999; white-space: nowrap; display: flex; align-items: baseline; gap: 7px; }
.select { width: 983px; height: 92px; border: 2px solid #aaa; border-radius: 8px; color: #999; display: flex; align-items: center; justify-content: space-between; padding: 10px 39px 0 12px; }
.ph { display: flex; align-items: baseline; gap: 8px; }
.tri { border: 8px solid transparent; border-top: 10px solid #888; border-bottom: 0; margin-bottom: 6px; }
.bar { display: flex; gap: 16px; padding: 16px 20px 0 0; }
.btn { display: flex; align-items: center; justify-content: center; gap: 9px; border: 2px solid; border-radius: 6px; flex: none; }
.bar .btn { height: 104px; font-size: 31px; padding-bottom: 4px; }
.bar .btn .ar { margin-top: -3px; }
.warning { background: #e7a03b; border-color: #d59131; color: #fff; }
.info { background: #56bbea; border-color: #49a9d5; color: #fff; }
.danger { background: #cb5541; border-color: #c24634; color: #fff; }
.success { background: #4ca360; border-color: #418e53; color: #fff; }
.primary { background: #538bb8; border-color: #4a7da6; color: #fff; }
.plain { background: #fff; border-color: #ddd; color: #333; }
.grey { background: #f4f4f4; border-color: #ddd; color: #444; }
.caret { border: 8px solid transparent; border-top: 8px solid currentColor; border-bottom: 0; margin-top: 8px; }
.badges { display: flex; padding: 16px 20px 0 0; height: 77px; color: #fff; font-weight: 700; font-size: 24px; line-height: 38px; width: 100%; border-bottom: 2px solid #f4f4f4; }
.bd { height: 39px; flex: none; white-space: nowrap; }
.first { width: 74px; padding-right: 15px; background: #56bbea; line-height: 35px; }
.shift { width: 110px; background: #4ca360; border-radius: 6px; text-align: center; }
.pb { width: 122px; padding-left: 14px; margin-right: 9px; background: #56bbea; font-size: 23.7px; }

.grid { margin: 34px 20px 0 0; width: 1694px; border-right: 2px solid #f4f4f4; border-top: 2px solid #f4f4f4; }
.tr { height: 118px; display: grid; grid-template-columns: 69px 111px 197px 248px 212px 200px 251px 268px 136px; border-bottom: 2px solid #f4f4f4; }
.c { border-left: 2px solid #f4f4f4; padding: 10px; text-align: right; direction: rtl; line-height: 41px; }
.th { height: 69px; border-bottom: 6px solid #f4f4f4; font-weight: 700; }
.th .c { text-align: left; padding-top: 7px; }
.mid { text-align: center; }
.sel { background: #deebf6; height: 119px; }
.inp { height: 75px; border: 2px solid #767676; border-radius: 5px; background: #fff; line-height: 69px; padding-right: 14px; }
.sku { text-align: left; padding: 0 0 0 13px; }
.del { display: flex; justify-content: center; }
.rm { width: 67px; height: 96px; }
.add { width: 238px; height: 96px; margin: 14px 20px 0 0; font-size: 34px; gap: 12px; }

.panel { width: 833px; height: 1705px; overflow: hidden; flex: none; background: #fff; border-top: 6px solid #538bb8; border-radius: 6px 6px 0 0; box-shadow: 0 2px 2px rgba(0, 0, 0, .1); padding: 20px 20px 0 16px; display: flex; flex-direction: column; align-items: flex-start; }
.row { width: 100%; flex: none; display: flex; border-top: 2px solid #f4f4f4; }
.lab { width: 451px; padding: 14px 16px 16px; font-weight: 700; }
.val { padding: 15px 15px 17px; }
.grand { background: #deebf6; }
.grand .val { font-size: 44px; font-weight: 700; }
.paid { background: #e2efda; }
.rest { background: #fbf7e4; }
.paid .val, .rest .val { font-weight: 700; }
.ptitle { font-weight: 700; height: 53px; flex: none; line-height: 36px; }
.pay { display: flex; width: 797px; height: 80px; flex: none; margin-bottom: 12px; color: #555; }
.pay.on { outline: 4px solid #e6ae5d; border-radius: 6px; }
.ad { background: #f4f4f4; border: 2px solid #d2d6de; display: flex; align-items: center; justify-content: center; font-size: 25px; padding-bottom: 4px; }
.fld { border: 2px solid #d2d6de; display: flex; align-items: center; padding-bottom: 3px; }
.a1 { width: 98px; }
.s1 { width: 238px; border-right: 0; padding-right: 23px; padding-left: 7px; justify-content: space-between; }
.s1 svg { margin-top: 4px; }
.a2 { width: 80px; }
.s2 { width: 148px; padding-right: 24px; border-right-width: 1px; }
.a3 { width: 84px; border-left-width: 1px; }
.s3 { width: 149px; padding-right: 25px; color: #999; border-radius: 8px 0 0 8px; }
.rmpay { width: 205px; height: 97px; font-size: 33px; gap: 10px; padding-bottom: 4px; }
.pad { flex: none; display: grid; grid-template-columns: repeat(3, 257px); grid-auto-rows: 120px; gap: 24px 25.5px; margin: 42px -12px 0 0; }
.key { border: 2px solid #ddd; border-radius: 24px; background: #f4f4f4; color: #444; font-size: 44px; display: flex; align-items: center; justify-content: center; padding-bottom: 2px; }
.back { background: #e7a03b; border-color: #d59131; color: #fff; padding-bottom: 4px; }
.acts { display: flex; gap: 20px; margin-top: 12px; flex: none; }
.acts .btn { width: 252.3px; height: 120px; border-radius: 10px; font-size: 37px; gap: 11px; padding-bottom: 4px; }
.post { width: 797px; height: 130px; margin-top: 24px; font-size: 44px; gap: 12px; padding-bottom: 12px; }
</style>
